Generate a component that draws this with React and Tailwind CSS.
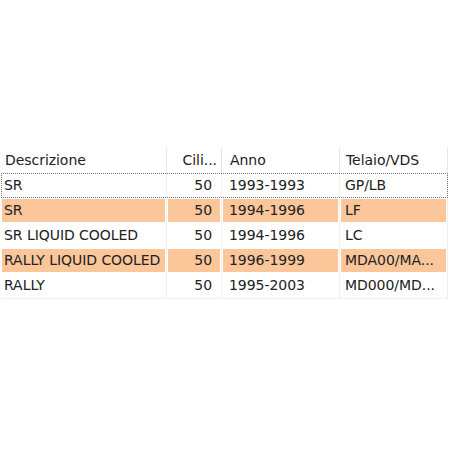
const cols = [
  { key: 'desc', label: 'Descrizione', w: 'w-[166px]' },
  { key: 'cil', label: 'Cili...', w: 'w-[55px]' },
  { key: 'anno', label: 'Anno', w: 'w-[118px]' },
  { key: 'vds', label: 'Telaio/VDS', w: 'w-[108px]' },
];

const rows = [
  { desc: 'SR', cil: '50', anno: '1993-1993', vds: 'GP/LB' },
  { desc: 'SR', cil: '50', anno: '1994-1996', vds: 'LF', hl: true },
  { desc: 'SR LIQUID COOLED', cil: '50', anno: '1994-1996', vds: 'LC' },
  { desc: 'RALLY LIQUID COOLED', cil: '50', anno: '1996-1999', vds: 'MDA00/MA...', hl: true },
  { desc: 'RALLY', cil: '50', anno: '1995-2003', vds: 'MD000/MD...' },
];

export default function App() {
  return (
    <div
      className="w-[450px] h-[450px] bg-white pt-[148px] text-[14px] tracking-[-0.05px] text-[#222]"
      style={{ fontFamily: '"DejaVu Sans", sans-serif' }}
    >
      <div className="w-[448px] pl-[1px]">
        {/* header */}
        <div className="flex h-[25px]">
          {cols.map((c) => (
            <div
              key={c.key}
              className={`${c.w} flex-none flex items-center whitespace-nowrap border-r border-[#e6e6e6] ${
                c.key === 'cil' ? 'justify-end pr-[4px]' : c.key === 'anno' ? 'pl-[8px]' : c.key === 'vds' ? 'pl-[6px]' : 'pl-[4px]'
              }`}
            >
              {c.label}
            </div>
          ))}
        </div>
        {/* body */}
        <div className="border-b border-[#eeeeee]">
          {rows.map((r, i) => (
            <div
              key={i}
              className={`relative flex h-[25px] ${i === 0 ? 'outline outline-1 outline-dotted outline-[#777] -outline-offset-1' : ''}`}
            >
              {cols.map((c) => (
                <div key={c.key} className={`${c.w} flex-none border-r border-[#f0f0f0] py-[1px] pl-[1px] pr-[1px]`}>
                  <div
                    className={`h-full flex items-center whitespace-nowrap ${r.hl ? 'bg-[#fbc69a]' : ''} ${
                      c.key === 'cil' ? 'justify-end pr-[8px]' : c.key === 'anno' ? 'pl-[6px]' : c.key === 'vds' ? 'pl-[4px]' : 'pl-[2px]'
                    }`}
                  >
                    {r[c.key]}
                  </div>
                </div>
              ))}
            </div>
          ))}
        </div>
      </div>
    </div>
  );
}
